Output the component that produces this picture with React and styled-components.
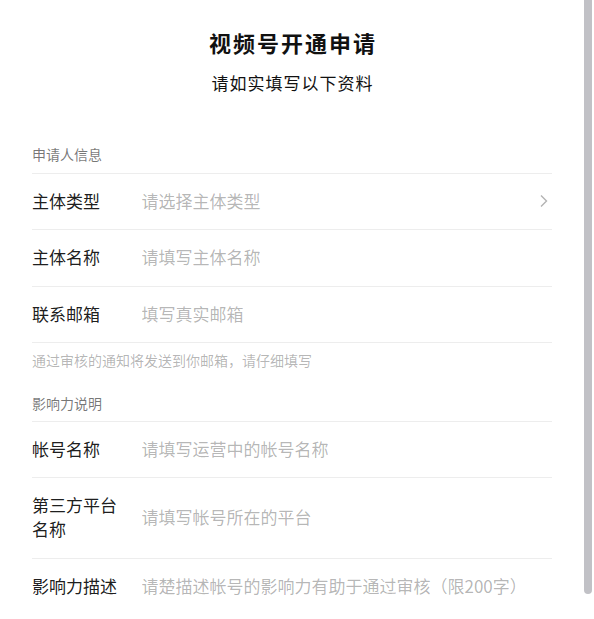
import React from "react";
import styled, { createGlobalStyle } from "styled-components";

const Global = createGlobalStyle`
  html, body { margin: 0; padding: 0; background: #fff; }
  body {
    font-family: "Noto Sans CJK SC", "Noto Sans", sans-serif;
    color: rgba(0, 0, 0, 0.9);
  }
`;

const Viewport = styled.div`
  display: flex;
  height: 619px;
  overflow: hidden;
`;

const Main = styled.main`
  flex: 1;
  min-width: 0;
  overflow: hidden;
`;

const ScrollTrack = styled.div`
  width: 10px;
  flex-shrink: 0;
  background: #fff;
`;

const ScrollThumb = styled.div`
  width: 8px;
  height: 594px;
  background: #c1c1c6;
  border-radius: 0 0 4px 4px;
`;

const Page = styled.div`
  padding: 27px 32px 31px;
`;

const Header = styled.header`
  text-align: center;
`;

const Title = styled.h1`
  margin: 0;
  font-size: 22px;
  line-height: 30px;
  font-weight: 700;
  letter-spacing: 2px;
  text-indent: 2px;
  color: #111;
`;

const Desc = styled.p`
  margin: 14px 0 0;
  font-size: 17px;
  line-height: 24px;
  letter-spacing: 1px;
  text-indent: 1px;
  color: #111;
`;

const Group = styled.section`
  margin-top: ${(p) => p.$gap}px;
`;

const GroupTitle = styled.div`
  font-size: 14px;
  line-height: 20px;
  color: rgba(0, 0, 0, 0.55);
  padding-bottom: ${(p) => p.$pb}px;
`;

const Cells = styled.div`
  border-bottom: ${(p) => (p.$closed ? "1px solid #ededed" : "none")};
`;

const Cell = styled.div`
  display: flex;
  align-items: center;
  border-top: 1px solid #ededed;
  padding: 15px 0 16.33px;
  font-size: 17px;
  line-height: 24px;
`;

const CellHd = styled.div`
  padding-right: 16px;
  flex-shrink: 0;
`;

const Label = styled.label`
  display: block;
  width: 85.5px;
  margin-right: 8px;
  word-break: break-all;
  color: rgba(0, 0, 0, 0.9);
`;

const CellBd = styled.div`
  flex: 1;
  min-width: 0;
  display: flex;
  align-items: center;
`;

const Input = styled.input`
  flex: 1;
  min-width: 0;
  border: 0;
  outline: 0;
  padding: 0;
  margin: 0;
  background: transparent;
  font-family: inherit;
  font-size: 17px;
  line-height: 24px;
  height: 24px;
  color: rgba(0, 0, 0, 0.9);
  &::placeholder {
    color: rgba(0, 0, 0, 0.3);
  }
`;

const Placeholder = styled.span`
  flex: 1;
  color: rgba(0, 0, 0, 0.3);
`;

const Arrow = styled.svg`
  flex-shrink: 0;
  display: block;
  margin-right: 1px;
`;

const Tips = styled.div`
  padding-top: 7px;
  font-size: 14px;
  line-height: 20px;
  color: rgba(0, 0, 0, 0.3);
`;

function Chevron() {
  return (
    <Arrow width="12" height="24" viewBox="0 0 12 24" aria-hidden="true">
      <path
        d="M2 6.5 L7.5 12 L2 17.5"
        fill="none"
        stroke="rgba(0,0,0,0.3)"
        strokeWidth="1.4"
      />
    </Arrow>
  );
}

function Field({ label, placeholder }) {
  return (
    <Cell>
      <CellHd>
        <Label>{label}</Label>
      </CellHd>
      <CellBd>
        <Input placeholder={placeholder} />
      </CellBd>
    </Cell>
  );
}

export default function App() {
  return (
    <>
      <Global />
      <Viewport>
        <Main>
          <Page>
            <Header>
              <Title>视频号开通申请</Title>
              <Desc>请如实填写以下资料</Desc>
            </Header>

            <Group $gap={49}>
              <GroupTitle $pb={9}>申请人信息</GroupTitle>
              <Cells $closed>
                <Cell>
                  <CellHd>
                    <Label>主体类型</Label>
                  </CellHd>
                  <CellBd>
                    <Placeholder>请选择主体类型</Placeholder>
                    <Chevron />
                  </CellBd>
                </Cell>
                <Field label="主体名称" placeholder="请填写主体名称" />
                <Field label="联系邮箱" placeholder="填写真实邮箱" />
              </Cells>
              <Tips>通过审核的通知将发送到你邮箱，请仔细填写</Tips>
            </Group>

            <Group $gap={23}>
              <GroupTitle $pb={8}>影响力说明</GroupTitle>
              <Cells>
                <Field label="帐号名称" placeholder="请填写运营中的帐号名称" />
                <Field label="第三方平台名称" placeholder="请填写帐号所在的平台" />
                <Field
                  label="影响力描述"
                  placeholder="请楚描述帐号的影响力有助于通过审核（限200字）"
                />
              </Cells>
            </Group>
          </Page>
        </Main>
        <ScrollTrack>
          <ScrollThumb />
        </ScrollTrack>
      </Viewport>
    </>
  );
}
